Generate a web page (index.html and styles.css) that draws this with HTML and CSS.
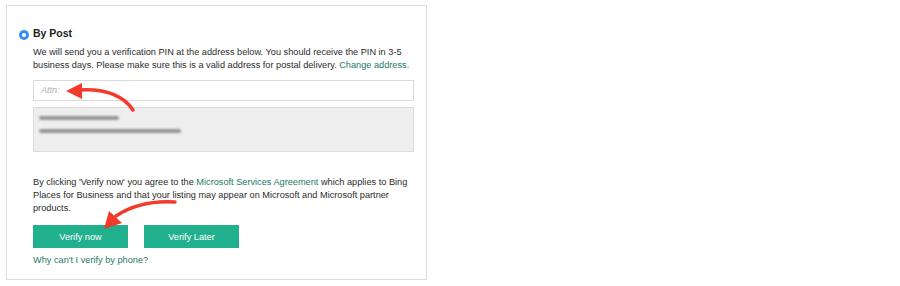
FILE: index.html
```html
<!DOCTYPE html>
<html>
<head>
<meta charset="utf-8">
<link rel="stylesheet" href="styles.css">
</head>
<body>
<div class="card">
  <div class="option-head">
    <span class="radio"><span class="radio-dot"></span></span>
    <span class="option-title">By Post</span>
  </div>
  <div class="content">
    <p class="text">We will send you a verification PIN at the address below. You should receive the PIN in 3-5 business days. Please make sure this is a valid address for postal delivery. <a class="link" href="#">Change address.</a></p>
    <div class="attn">Attn:</div>
    <div class="address">
      <div class="blur blur-1"></div>
      <div class="blur blur-2"></div>
    </div>
    <p class="text agree">By clicking 'Verify now' you agree to the <a class="link" href="#">Microsoft Services Agreement</a> which applies to Bing Places for Business and that your listing may appear on Microsoft and Microsoft partner products.</p>
    <div class="buttons">
      <button class="btn">Verify now</button>
      <button class="btn">Verify Later</button>
    </div>
    <a class="link phone" href="#">Why can't I verify by phone?</a>
  </div>
</div>
<svg class="arrows" width="900" height="286" viewBox="0 0 900 286">
  <path d="M133,110 Q118,88 80,90" fill="none" stroke="#f23b2c" stroke-width="3.5" stroke-linecap="round"/>
  <polygon points="66,91 82,83 82,99" fill="#f23b2c"/>
  <path d="M175,202 Q140,200 116,216" fill="none" stroke="#f23b2c" stroke-width="3.5" stroke-linecap="round"/>
  <polygon points="104,229 109,211 122,223" fill="#f23b2c"/>
</svg>
</body>
</html>
```

FILE: styles.css
```css
html, body {
  margin: 0;
  padding: 0;
  background: #fff;
}
body {
  font-family: "Liberation Sans", Arial, sans-serif;
  color: #333;
  position: relative;
  width: 900px;
  height: 286px;
  overflow: hidden;
}
.card {
  margin: 5px 0 0 6px;
  box-sizing: border-box;
  width: 421px;
  height: 275px;
  border: 1px solid #dcdcdc;
  padding: 21px 0 0 0;
}
.option-head {
  display: flex;
  align-items: center;
  height: 13px;
  padding-left: 12px;
  gap: 4px;
}
.radio {
  width: 10px;
  height: 10px;
  border-radius: 50%;
  background: #3a8ef2;
  display: flex;
  align-items: center;
  justify-content: center;
  margin-top: 2px;
}
.radio-dot {
  width: 4px;
  height: 4px;
  border-radius: 50%;
  background: #fff;
}
.option-title {
  font-size: 10.5px;
  font-weight: bold;
  line-height: 13px;
  color: #222;
}
.content {
  padding: 0 12px 0 26px;
}
.text {
  margin: 6px 0 0;
  font-size: 9.2px;
  line-height: 13px;
  color: #2b2b2b;
}
.link {
  color: #1d7a67;
  text-decoration: none;
}
.attn {
  margin-top: 8px;
  height: 21px;
  box-sizing: border-box;
  border: 1px solid #dadada;
  font-size: 9px;
  font-style: italic;
  color: #b0b0b0;
  line-height: 19px;
  padding-left: 7px;
}
.address {
  margin-top: 6px;
  height: 45px;
  box-sizing: border-box;
  border: 1px solid #dcdcdc;
  background: #eeeeee;
  padding: 8px 0 0 5px;
}
.blur {
  height: 4px;
  background: #959595;
  border-radius: 2px;
  filter: blur(1.3px);
}
.blur-1 {
  width: 80px;
}
.blur-2 {
  width: 142px;
  margin-top: 9px;
}
.agree {
  margin-top: 24px;
}
.buttons {
  display: flex;
  gap: 16px;
  margin-top: 10px;
}
.btn {
  width: 95px;
  height: 23px;
  border: none;
  background: #21b08e;
  color: #fff;
  font-family: "Liberation Sans", Arial, sans-serif;
  font-size: 9.2px;
  padding: 0;
}
.phone {
  display: block;
  margin-top: 6px;
  font-size: 9.2px;
  line-height: 13px;
}
.arrows {
  position: absolute;
  left: 0;
  top: 0;
  pointer-events: none;
}
```
